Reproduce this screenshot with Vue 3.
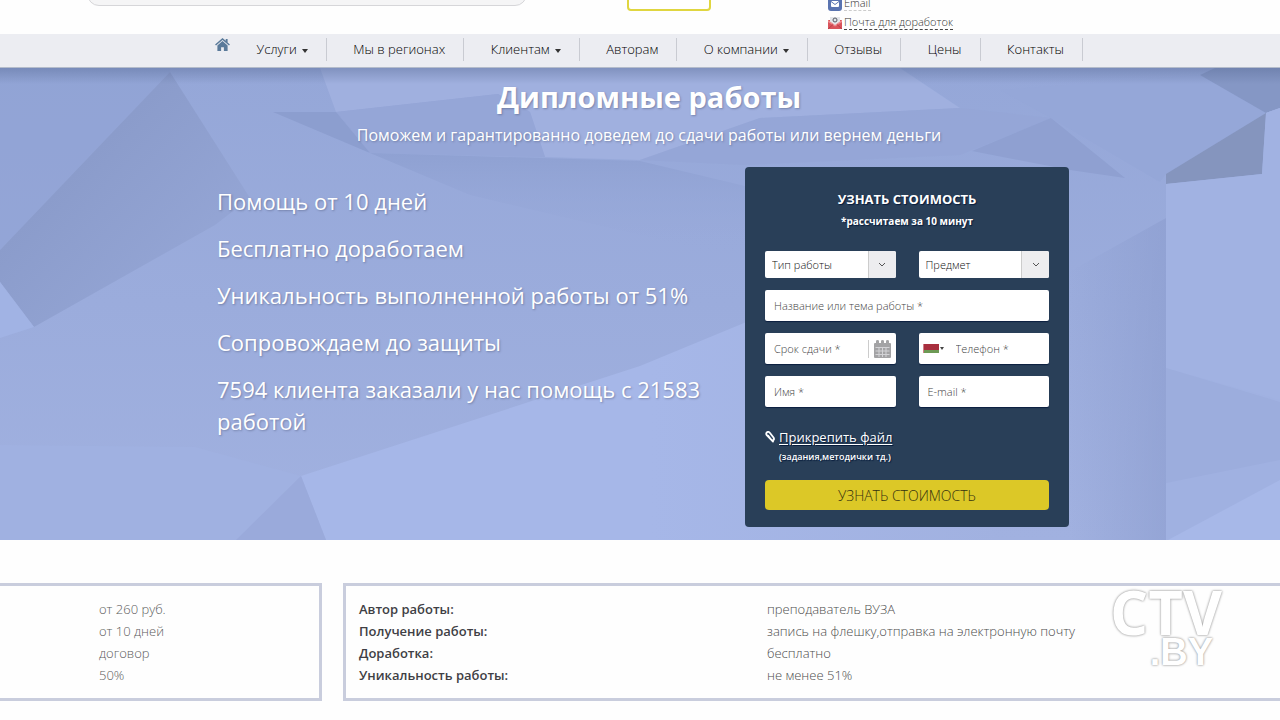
<script setup>
import { ref } from 'vue'

const menu = [
  { title: 'Услуги', drop: true },
  { title: 'Мы в регионах' },
  { title: 'Клиентам', drop: true },
  { title: 'Авторам' },
  { title: 'О компании', drop: true },
  { title: 'Отзывы' },
  { title: 'Цены' },
  { title: 'Контакты' },
]

const benefits = [
  'Помощь от 10 дней',
  'Бесплатно доработаем',
  'Уникальность выполненной работы от 51%',
  'Сопровождаем до защиты',
  '7594 клиента заказали у нас помощь с 21583 работой',
]

const terms = ['от 260 руб.', 'от 10 дней', 'договор', '50%']

const details = [
  ['Автор работы:', 'преподаватель ВУЗА'],
  ['Получение работы:', 'запись на флешку,отправка на электронную почту'],
  ['Доработка:', 'бесплатно'],
  ['Уникальность работы:', 'не менее 51%'],
]

const form = ref({ topic: '', date: '', phone: '', name: '', email: '' })
</script>

<template>
  <div class="page">
    <header class="top">
      <input class="search" type="search" aria-label="Поиск" />
      <button class="call" type="button" aria-label="Заказать"></button>
      <ul class="contacts">
        <li>
          <svg class="mail-icon" viewBox="0 0 14 14" aria-hidden="true">
            <rect width="14" height="14" rx="3" fill="#5a74b0" />
            <rect x="3" y="4" width="8" height="6" rx="1" fill="#fff" />
            <path d="M3 4.5l4 3 4-3" fill="none" stroke="#5a74b0" />
          </svg>
          <a class="faint" href="#">Email</a>
        </li>
        <li>
          <svg class="mail-icon" viewBox="0 0 14 14" aria-hidden="true">
            <path d="M0 4h14v9H0z" fill="#d9535b" />
            <path d="M2 1h10v5L7 9.500 2 6z" fill="#e4e6ea" />
            <circle cx="7" cy="4" r="2" fill="none" stroke="#555b66" />
            <path d="M0 4l7 5 7-5v2L7 10.500 0 6z" fill="#ee8c8f" />
            <path d="M0 13l5-4.500M14 13L9 8.500" stroke="#b93f49" fill="none" />
          </svg>
          <a href="#">Почта для доработок</a>
        </li>
      </ul>
    </header>

    <nav class="nav">
      <div class="wrap nav-row">
        <a class="home" href="#" aria-label="Главная">
          <svg viewBox="0 0 16 14" aria-hidden="true">
            <path d="M8 0L0 7l1 1.200L8 2.200l7 6 1-1.200-2.500-2.200V1h-2v2z" fill="#5a7a9a" />
            <path d="M8 3.300L2.500 8v6h4v-4h3v4h4V8z" fill="#5a7a9a" />
          </svg>
        </a>
        <a v-for="item in menu" :key="item.title" class="item" href="#">
          {{ item.title }}<i v-if="item.drop" class="caret"></i>
        </a>
      </div>
    </nav>

    <main>
      <section class="hero">
        <svg class="facets" viewBox="0 68 1280 472" preserveAspectRatio="none" aria-hidden="true">
          <defs>
            <linearGradient id="base" x1="0" y1="0" x2="0" y2="1">
              <stop offset="0" stop-color="#95a7d8" />
              <stop offset="1" stop-color="#a1b1e0" />
            </linearGradient>
            <linearGradient id="peak" x1="0" y1="0" x2="1" y2="1">
              <stop offset="0.3" stop-color="#8a9bca" />
              <stop offset="1" stop-color="#99aada" />
            </linearGradient>
            <linearGradient id="slab" x1="0" y1="0" x2="1" y2="0">
              <stop offset="0" stop-color="#8c9dcf" stop-opacity="0" />
              <stop offset="1" stop-color="#8c9dcf" />
            </linearGradient>
            <linearGradient id="fade" x1="0" y1="0" x2="0" y2="1">
              <stop offset="0" stop-color="#8fa1d2" />
              <stop offset="1" stop-color="#9aabdc" stop-opacity="0" />
            </linearGradient>
            <linearGradient id="floor" x1="0" y1="0" x2="1" y2="0">
              <stop offset="0.5" stop-color="#a6b7e8" />
              <stop offset="1" stop-color="#a1b1e0" />
            </linearGradient>
            <linearGradient id="shade" x1="0" y1="0" x2="0" y2="1">
              <stop offset="0" stop-color="#52658f" stop-opacity="0.4" />
              <stop offset="1" stop-color="#52658f" stop-opacity="0" />
            </linearGradient>
          </defs>
          <rect y="68" width="1280" height="472" fill="url(#base)" />
          <path d="M0 68H170V72L0 250z" fill="#90a2d3" opacity=".6" />
          <path d="M170 72L0 250V282L34 327L215 225L250 198z" fill="url(#peak)" />
          <path d="M0 282L34 327L0 338z" fill="#a1b3e4" />
          <path d="M320 68L336 112L498 94L530 112L545 157L640 160L760 118L960 108L900 68z" fill="#a0b0df" />
          <path d="M336 112L498 94L530 112L545 157L370 153z" fill="#95a6d7" />
          <path d="M273 112H336L370 153z" fill="#8c9ecf" />
          <path d="M370 153L640 161L745 186V260L470 195z" fill="url(#fade)" />
          <path d="M640 160L760 118L960 108L1051 118L960 155L745 165z" fill="#94a5d6" opacity=".7" />
          <path d="M1051 118L972 151L1070 170L1125 178z" fill="#8fa0d1" />
          <path d="M1051 118L1160 182L1166 174L1266 113L1200 75L1000 90z" fill="#95a7d8" />
          <path d="M1200 75L1215 68H1280V108L1266 113z" fill="#8597c5" />
          <path d="M1266 113L1280 108V540H1166V184L1262 174z" fill="#a0b1e1" />
          <path d="M1266 113L1166 174V184L1262 174z" fill="#8595be" />
          <path d="M1166 184L1262 174L1266 113L1280 108V400L1166 368z" fill="#a1b2e2" />
          <path d="M1166 368L1280 402V460L1166 483z" fill="#9caddd" />
          <path d="M1168 540L1280 480V540z" fill="#a7b8e8" />
          <path d="M1069 272L1166 218V540H1069z" fill="url(#slab)" opacity=".6" />
          <path d="M301 476L640 366L800 300L1000 540H326z" fill="url(#floor)" />
          <path d="M0 445L195 447L301 476L236 540H0z" fill="#a0b1e1" />
          <path d="M301 476L236 540H326z" fill="#9aaadb" />
          <rect y="68" width="1280" height="16" fill="url(#shade)" />
        </svg>

        <div class="wrap hero-body">
          <h1>Дипломные работы</h1>
          <p class="lead">Поможем и гарантированно доведем до сдачи работы или вернем деньги</p>

          <div class="columns">
            <ul class="benefits">
              <li v-for="line in benefits" :key="line">{{ line }}</li>
            </ul>

            <form class="card" @submit.prevent>
              <h2>УЗНАТЬ СТОИМОСТЬ</h2>
              <p class="note">*рассчитаем за 10 минут</p>

              <div class="fields">
                <div class="select">
                  <select aria-label="Тип работы"><option>Тип работы</option></select>
                  <span class="arrow">
                    <svg viewBox="0 0 8 6" aria-hidden="true"><path d="M1 1l3 3 3-3" fill="none" stroke="#555" /></svg>
                  </span>
                </div>
                <div class="select">
                  <select aria-label="Предмет"><option>Предмет</option></select>
                  <span class="arrow">
                    <svg viewBox="0 0 8 6" aria-hidden="true"><path d="M1 1l3 3 3-3" fill="none" stroke="#555" /></svg>
                  </span>
                </div>
                <input v-model="form.topic" class="box wide" type="text" placeholder="Название или тема работы *" aria-label="Название или тема работы" />
                <div class="box combo">
                  <input v-model="form.date" type="text" placeholder="Срок сдачи *" aria-label="Срок сдачи" />
                  <span class="calendar">
                    <svg viewBox="0 0 17 18" aria-hidden="true">
                      <path d="M0 4q0-1 1-1h1V1q0-1 1.500-1T5 1v2h2V1q0-1 1.500-1T10 1v2h2V1q0-1 1.500-1T15 1v2h1q1 0 1 1v13q0 1-1 1H1q-1 0-1-1z" fill="#a3a3a5" />
                      <path d="M1.500 7.500h14M1.500 11h14M1.500 14.500h14M5 7v10M8.500 7v10M12 7v10" stroke="#d3d3d6" fill="none" />
                    </svg>
                  </span>
                </div>
                <div class="box combo">
                  <button class="country" type="button" aria-label="Беларусь">
                    <svg viewBox="0 0 16 9" aria-hidden="true">
                      <rect width="16" height="9" fill="#a82f3e" />
                      <rect y="6" width="16" height="3" fill="#6d9a55" />
                      <rect width="1" height="9" fill="#cf8088" />
                    </svg>
                    <i class="tiny-caret"></i>
                  </button>
                  <input v-model="form.phone" type="tel" placeholder="Телефон *" aria-label="Телефон" />
                </div>
                <input v-model="form.name" class="box" type="text" placeholder="Имя *" aria-label="Имя" />
                <input v-model="form.email" class="box" type="email" placeholder="E-mail *" aria-label="E-mail" />
              </div>

              <div class="attach">
                <svg viewBox="0 0 10 12" aria-hidden="true">
                  <path d="M8 10.500L2 4.500Q.5 2.500 2 1.300T5 2l3.500 4.500Q9.500 8.200 8.500 9T6 8.500L3.200 4.800" fill="none" stroke="#fff" stroke-width="1.800" stroke-linecap="round" />
                </svg>
                <a href="#">Прикрепить файл</a>
                <small>(задания,методички тд.)</small>
              </div>

              <button class="submit" type="submit">УЗНАТЬ СТОИМОСТЬ</button>
            </form>
          </div>
        </div>
      </section>

      <section class="facts">
        <ul class="panel terms">
          <li v-for="t in terms" :key="t">{{ t }}</li>
        </ul>
        <div class="panel details">
          <table>
            <tbody>
              <tr v-for="[name, value] in details" :key="name">
                <th scope="row">{{ name }}</th>
                <td>{{ value }}</td>
              </tr>
            </tbody>
          </table>
        </div>
      </section>
    </main>

    <div class="watermark"><span>CTV</span><span class="domain">.BY</span></div>
  </div>
</template>

<style>
body {
  margin: 0;
  background: #fefefe;
}
</style>

<style scoped>
* {
  box-sizing: border-box;
}

.page {
  position: relative;
  min-height: 100vh;
  overflow: hidden;
  font-family: 'Open Sans', 'Noto Sans', sans-serif;
  font-size: 13px;
  color: #3c3c3c;
}

ul {
  list-style: none;
  margin: 0;
  padding: 0;
}

a {
  color: inherit;
  text-decoration: none;
}

input,
select,
button {
  font: inherit;
  color: inherit;
}

.top {
  display: flex;
  align-items: flex-end;
  height: 34px;
  padding-left: 87px;
  overflow: hidden;
}

.search {
  flex: none;
  width: 440px;
  height: 36px;
  margin: 0 100px 28px 0;
  border: 1px solid #d6d6d9;
  border-radius: 12px;
  background: #f5f5f6;
}

.call {
  flex: none;
  width: 84px;
  height: 36px;
  margin: 0 117px 23px 0;
  border: 2px solid #e0d640;
  border-radius: 4px;
  background: #fff;
}

.contacts {
  font-size: 11px;
  font-weight: 300;
  line-height: 14px;
  color: #333;
}

.contacts li {
  display: flex;
  align-items: center;
  gap: 2px;
  margin-bottom: 4px;
}

.contacts a {
  border-bottom: 1px dashed #444;
}

.contacts a.faint {
  border-color: #ccc;
}

.mail-icon {
  width: 14px;
  height: 14px;
}

.nav {
  position: relative;
  border-bottom: 1px solid #b4bccb;
  background: #ecedf2;
}

.wrap {
  width: 868px;
  margin: 0 auto;
}

.nav,
.hero {
  padding-left: 18px;
}

.nav-row {
  display: flex;
  justify-content: space-between;
  padding: 4px 0 6px;
  white-space: nowrap;
}

.home svg {
  display: block;
  width: 15px;
  height: 13px;
}

.item {
  padding: 0 18px 0 26px;
  border-right: 1px solid #c9cbd2;
  font-size: 13px;
  font-weight: 300;
  line-height: 23px;
  color: #000;
}

.caret {
  display: inline-block;
  margin-left: 5px;
  border: 3px solid transparent;
  border-top: 4px solid #333;
  border-bottom: 0;
  vertical-align: 1px;
}

.hero {
  position: relative;
  color: #fff;
  text-shadow: 1px 1px 2px rgba(70, 80, 110, 0.45);
}

.facets {
  position: absolute;
  inset: 0;
  width: 100%;
  height: 100%;
}

.hero-body {
  position: relative;
  padding: 9px 0 13px;
}

h1 {
  margin: 0;
  font-size: 29px;
  line-height: 40px;
  text-align: center;
}

.lead {
  margin: 6px 0 19px;
  font-size: 16px;
  line-height: 25px;
  text-align: center;
}

.columns {
  display: flex;
  justify-content: space-between;
  padding: 0 14px 0 2px;
}

.benefits {
  width: 500px;
  padding-top: 18px;
  font-size: 22px;
  line-height: 32px;
}

.benefits li {
  margin-bottom: 15px;
}

.card {
  width: 324px;
  padding: 21px 20px 17px;
  border-radius: 4px;
  background: #293f58;
  text-shadow: 1px 1px 1px #071c3c;
}

.card h2 {
  margin: 0;
  font-size: 13px;
  line-height: 22px;
  text-align: center;
}

.note {
  margin: 0 0 19px;
  font-size: 10px;
  font-weight: 700;
  line-height: 22px;
  text-align: center;
}

.fields {
  display: grid;
  grid-template-columns: repeat(2, minmax(0, 1fr));
  gap: 12px 23px;
  color: #111;
  font-size: 11px;
  font-weight: 300;
  text-shadow: none;
}

.select {
  position: relative;
  display: flex;
  height: 27px;
  border-radius: 2px;
  background: #fff;
  overflow: hidden;
}

.select select {
  width: 100%;
  padding: 0 28px 0 7px;
  border: 0;
  background: none;
  appearance: none;
}

.arrow {
  position: absolute;
  top: 0;
  right: 0;
  bottom: 0;
  display: flex;
  align-items: center;
  justify-content: center;
  width: 28px;
  border-left: 1px solid #ccc;
  background: #ededef;
  pointer-events: none;
}

.arrow svg {
  width: 8px;
  height: 6px;
}

.box {
  width: 100%;
  height: 31px;
  padding: 0 9px;
  border: 0;
  border-radius: 2px;
  background: #fff;
  box-shadow: 0 1px 1px #0b1f40;
}

.wide {
  grid-column: span 2;
}

.combo {
  display: flex;
  align-items: center;
}

.combo input {
  flex: 1;
  min-width: 0;
  padding: 0;
  border: 0;
  background: none;
}

::placeholder {
  color: #444;
  opacity: 1;
}

.calendar {
  margin-right: -4px;
  padding-left: 5px;
  border-left: 1px solid #ccc;
}

.calendar svg {
  display: block;
  width: 17px;
  height: 18px;
}

.country {
  display: flex;
  align-items: center;
  gap: 1px;
  margin: 0 12px 0 -5px;
  padding: 0;
  border: 0;
  background: none;
}

.country svg {
  width: 16px;
  height: 9px;
}

.tiny-caret {
  border: 2px solid transparent;
  border-top: 3px solid #444;
  border-bottom: 0;
}

.attach {
  display: grid;
  grid-template-columns: 10px 1fr;
  column-gap: 4px;
  align-items: center;
  margin: 19px 0 14px;
  font-size: 13px;
  line-height: 22px;
}

.attach svg {
  width: 10px;
  height: 12px;
}

.attach a {
  text-decoration: underline;
  text-underline-offset: 2px;
}

.attach small {
  grid-column: 2;
  font-size: 9px;
  font-weight: 600;
  line-height: 18px;
}

.submit {
  display: block;
  width: 100%;
  height: 30px;
  border: 0;
  border-radius: 4px;
  background: #dcc827;
  color: #35310f;
  font-size: 14px;
  font-weight: 300;
}

.facts {
  display: flex;
  gap: 21px;
  padding-top: 43px;
  line-height: 22px;
}

.panel {
  padding: 12px 13px;
  border: 3px solid #c9cddd;
}

.terms {
  width: 322px;
  padding-left: 99px;
  border-left: 0;
  font-weight: 300;
  color: #5c5c5c;
}

.details {
  flex: 1;
  border-right: 0;
}

table {
  width: 100%;
  border-collapse: collapse;
}

th,
td {
  padding: 0;
  text-align: left;
}

th {
  width: 408px;
  font-weight: 600;
  color: #3f3f45;
}

td {
  font-weight: 300;
  color: #4c4c4c;
}

.watermark {
  position: absolute;
  top: 585px;
  right: 58px;
  display: flex;
  flex-direction: column;
  align-items: flex-end;
  color: #fff;
  font-size: 60px;
  font-weight: 700;
  line-height: 54px;
  text-shadow: 0 0 2px #999, 0 0 3px #bbb;
}

.domain {
  padding-right: 9px;
  font-family: 'Liberation Sans', sans-serif;
  font-size: 38px;
  line-height: 26px;
}
</style>
